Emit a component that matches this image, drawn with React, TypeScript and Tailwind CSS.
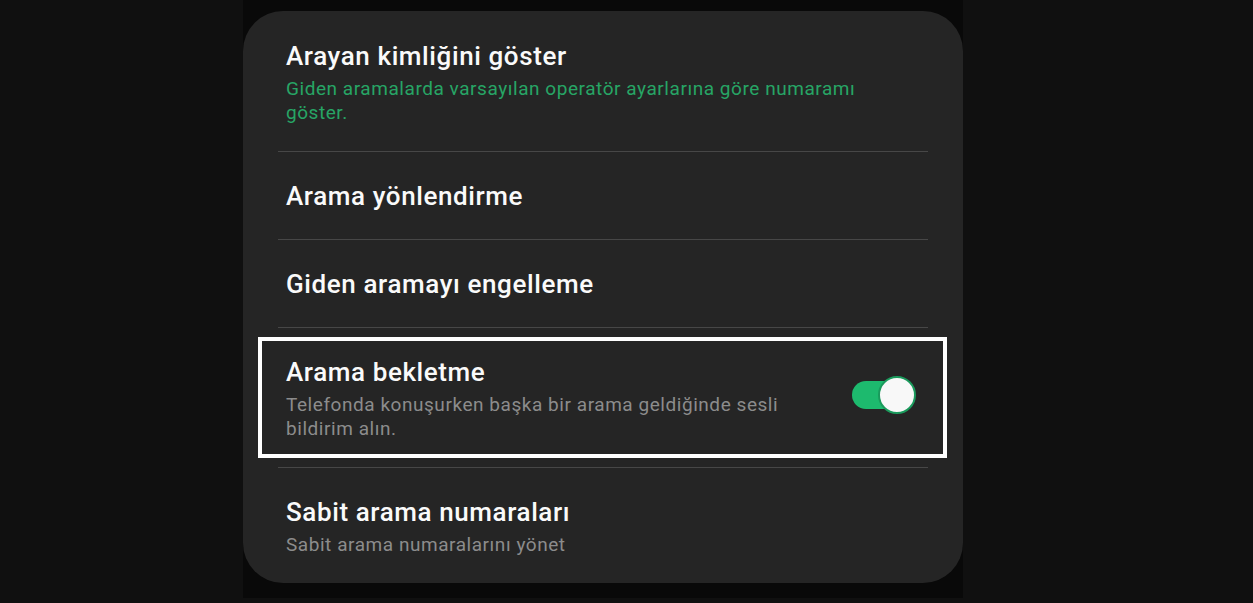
import React from "react";

type Row = {
  title: string;
  subtitle?: string;
  green?: boolean;
  toggle?: boolean;
  highlight?: boolean;
};

const rows: Row[] = [
  {
    title: "Arayan kimliğini göster",
    subtitle: "Giden aramalarda varsayılan operatör ayarlarına göre numaramı göster.",
    green: true,
  },
  { title: "Arama yönlendirme" },
  { title: "Giden aramayı engelleme" },
  {
    title: "Arama bekletme",
    subtitle: "Telefonda konuşurken başka bir arama geldiğinde sesli bildirim alın.",
    toggle: true,
    highlight: true,
  },
  { title: "Sabit arama numaraları", subtitle: "Sabit arama numaralarını yönet" },
];

function Toggle() {
  return (
    <div className="relative w-[64px] h-[38px] shrink-0 mb-[8px] mr-[4px]">
      <div className="absolute left-0 top-[5px] w-[50px] h-[28px] rounded-full bg-[#1dba6e]"></div>
      <div className="absolute right-0 top-0 w-[38px] h-[38px] rounded-full bg-[#f8f8f8] border-2 border-[#1a9a5c]"></div>
    </div>
  );
}

export default function App() {
  return (
    <div
      className="min-h-[603px] bg-[#101010] pl-[243px]"
      style={{ fontFamily: "Roboto, 'Noto Sans', sans-serif" }}
    >
      <div className="w-[720px] bg-[#090909] pt-[11px] pb-[15px]">
        <div className="rounded-[40px] bg-[#252525] px-[35px]">
          {rows.map((row, i) => (
            <div
              key={row.title}
              className={`relative flex items-center px-2 pb-[26px] ${i === 0 ? "pt-[29px]" : "pt-[28px]"} ${
                i > 0 ? "border-t border-[#474747]" : ""
              } ${i === 1 || i === 2 ? "pb-[27px]" : ""} ${i === rows.length - 1 ? "pb-[25px]" : ""}`}
            >
              {row.highlight && (
                <div className="absolute left-[-20px] right-[-19px] top-[9px] bottom-[9px] border-4 border-white pointer-events-none"></div>
              )}
              <div className="flex-1">
                <div className="text-[26px] leading-[32px] font-medium text-[#fafafa] tracking-[0.6px]">
                  {row.title}
                </div>
                {row.subtitle && (
                  <div
                    className={`mt-[5px] text-[19px] leading-[24px] tracking-[0.55px] ${
                      row.green ? "text-[#27a565] max-w-[600px]" : "text-[#8c8c8c] max-w-[520px]"
                    }`}
                  >
                    {row.subtitle}
                  </div>
                )}
              </div>
              {row.toggle && <Toggle />}
            </div>
          ))}
        </div>
      </div>
    </div>
  );
}
